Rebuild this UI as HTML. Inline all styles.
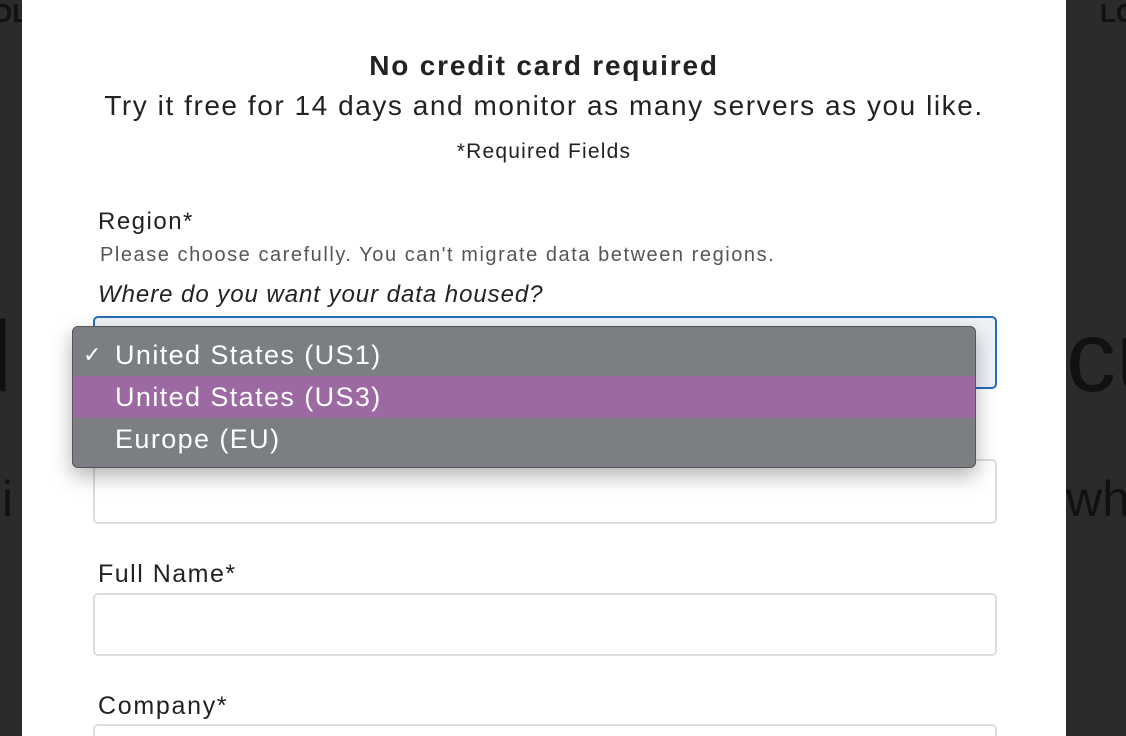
<!DOCTYPE html>
<html><head><style>
html,body{margin:0;width:1126px;height:736px;overflow:hidden}
body{background:#2b2b2b;font-family:"Liberation Sans",sans-serif;position:relative}
.bgt{position:absolute;color:#111;font-family:"Liberation Sans",sans-serif}
.modal{position:absolute;left:22px;top:0;width:1044px;height:736px;background:#fff;overflow:hidden}
.c{position:absolute;left:0;width:1044px;text-align:center;color:#222}
.l{position:absolute;left:76px;color:#222}
.inp{position:absolute;left:71px;width:900px;border:2px solid #ddd;border-radius:5px;background:#fff}
.dd{position:absolute;left:72px;top:326px;width:902px;height:140px;background:#7b7f83;border:1px solid #555;border-radius:6px;box-shadow:0 8px 20px rgba(0,0,0,.3)}
.row{position:absolute;left:0;width:902px;height:42px;line-height:42px;color:#fff;font-size:27px;letter-spacing:1.4px}
</style></head><body>
<div class="bgt" style="left:-8px;top:-2px;font-size:26px;font-weight:bold">OL</div>
<div class="bgt" style="left:1100px;top:-2px;font-size:26px;font-weight:bold">LO</div>
<div class="bgt" style="left:-10px;top:300px;font-size:100px">l</div>
<div class="bgt" style="left:1066px;top:300px;font-size:100px">cu</div>
<div class="bgt" style="left:2px;top:470px;font-size:50px">i</div>
<div class="bgt" style="left:1066px;top:470px;font-size:50px">wh</div>
<div class="modal">
<div class="c" style="top:50px;font-size:28px;font-weight:bold;letter-spacing:1.8px">No credit card required</div>
<div class="c" style="top:90px;font-size:28px;letter-spacing:1.55px">Try it free for 14 days and monitor as many servers as you like.</div>
<div class="c" style="top:140px;font-size:21px;letter-spacing:1.2px">*Required Fields</div>
<div class="l" style="top:208px;font-size:24px;letter-spacing:1.5px">Region*</div>
<div class="l" style="top:244px;font-size:20px;color:#555;left:78px;letter-spacing:1.55px">Please choose carefully. You can't migrate data between regions.</div>
<div class="l" style="top:281px;font-size:24px;font-style:italic;letter-spacing:0.95px">Where do you want your data housed?</div>
<div class="inp" style="top:316px;height:69px;border-color:#2a6bb5;background:#eef3f8"></div>
<div class="inp" style="top:459px;height:61px"></div>
<div class="l" style="top:560px;font-size:25px;letter-spacing:1.5px">Full Name*</div>
<div class="inp" style="top:593px;height:59px"></div>
<div class="l" style="top:692px;font-size:25px;letter-spacing:1.7px">Company*</div>
<div class="inp" style="top:724px;height:10px;border-bottom:none;border-radius:5px 5px 0 0"></div>
</div>
<div class="dd">
<div class="row" style="top:7px"><span style="position:absolute;left:10px;font-size:22px">✓</span><span style="position:absolute;left:42px">United States (US1)</span></div>
<div class="row" style="top:49px;background:#9d69a3"><span style="position:absolute;left:42px">United States (US3)</span></div>
<div class="row" style="top:91px"><span style="position:absolute;left:42px">Europe (EU)</span></div>
</div>
</body></html>
